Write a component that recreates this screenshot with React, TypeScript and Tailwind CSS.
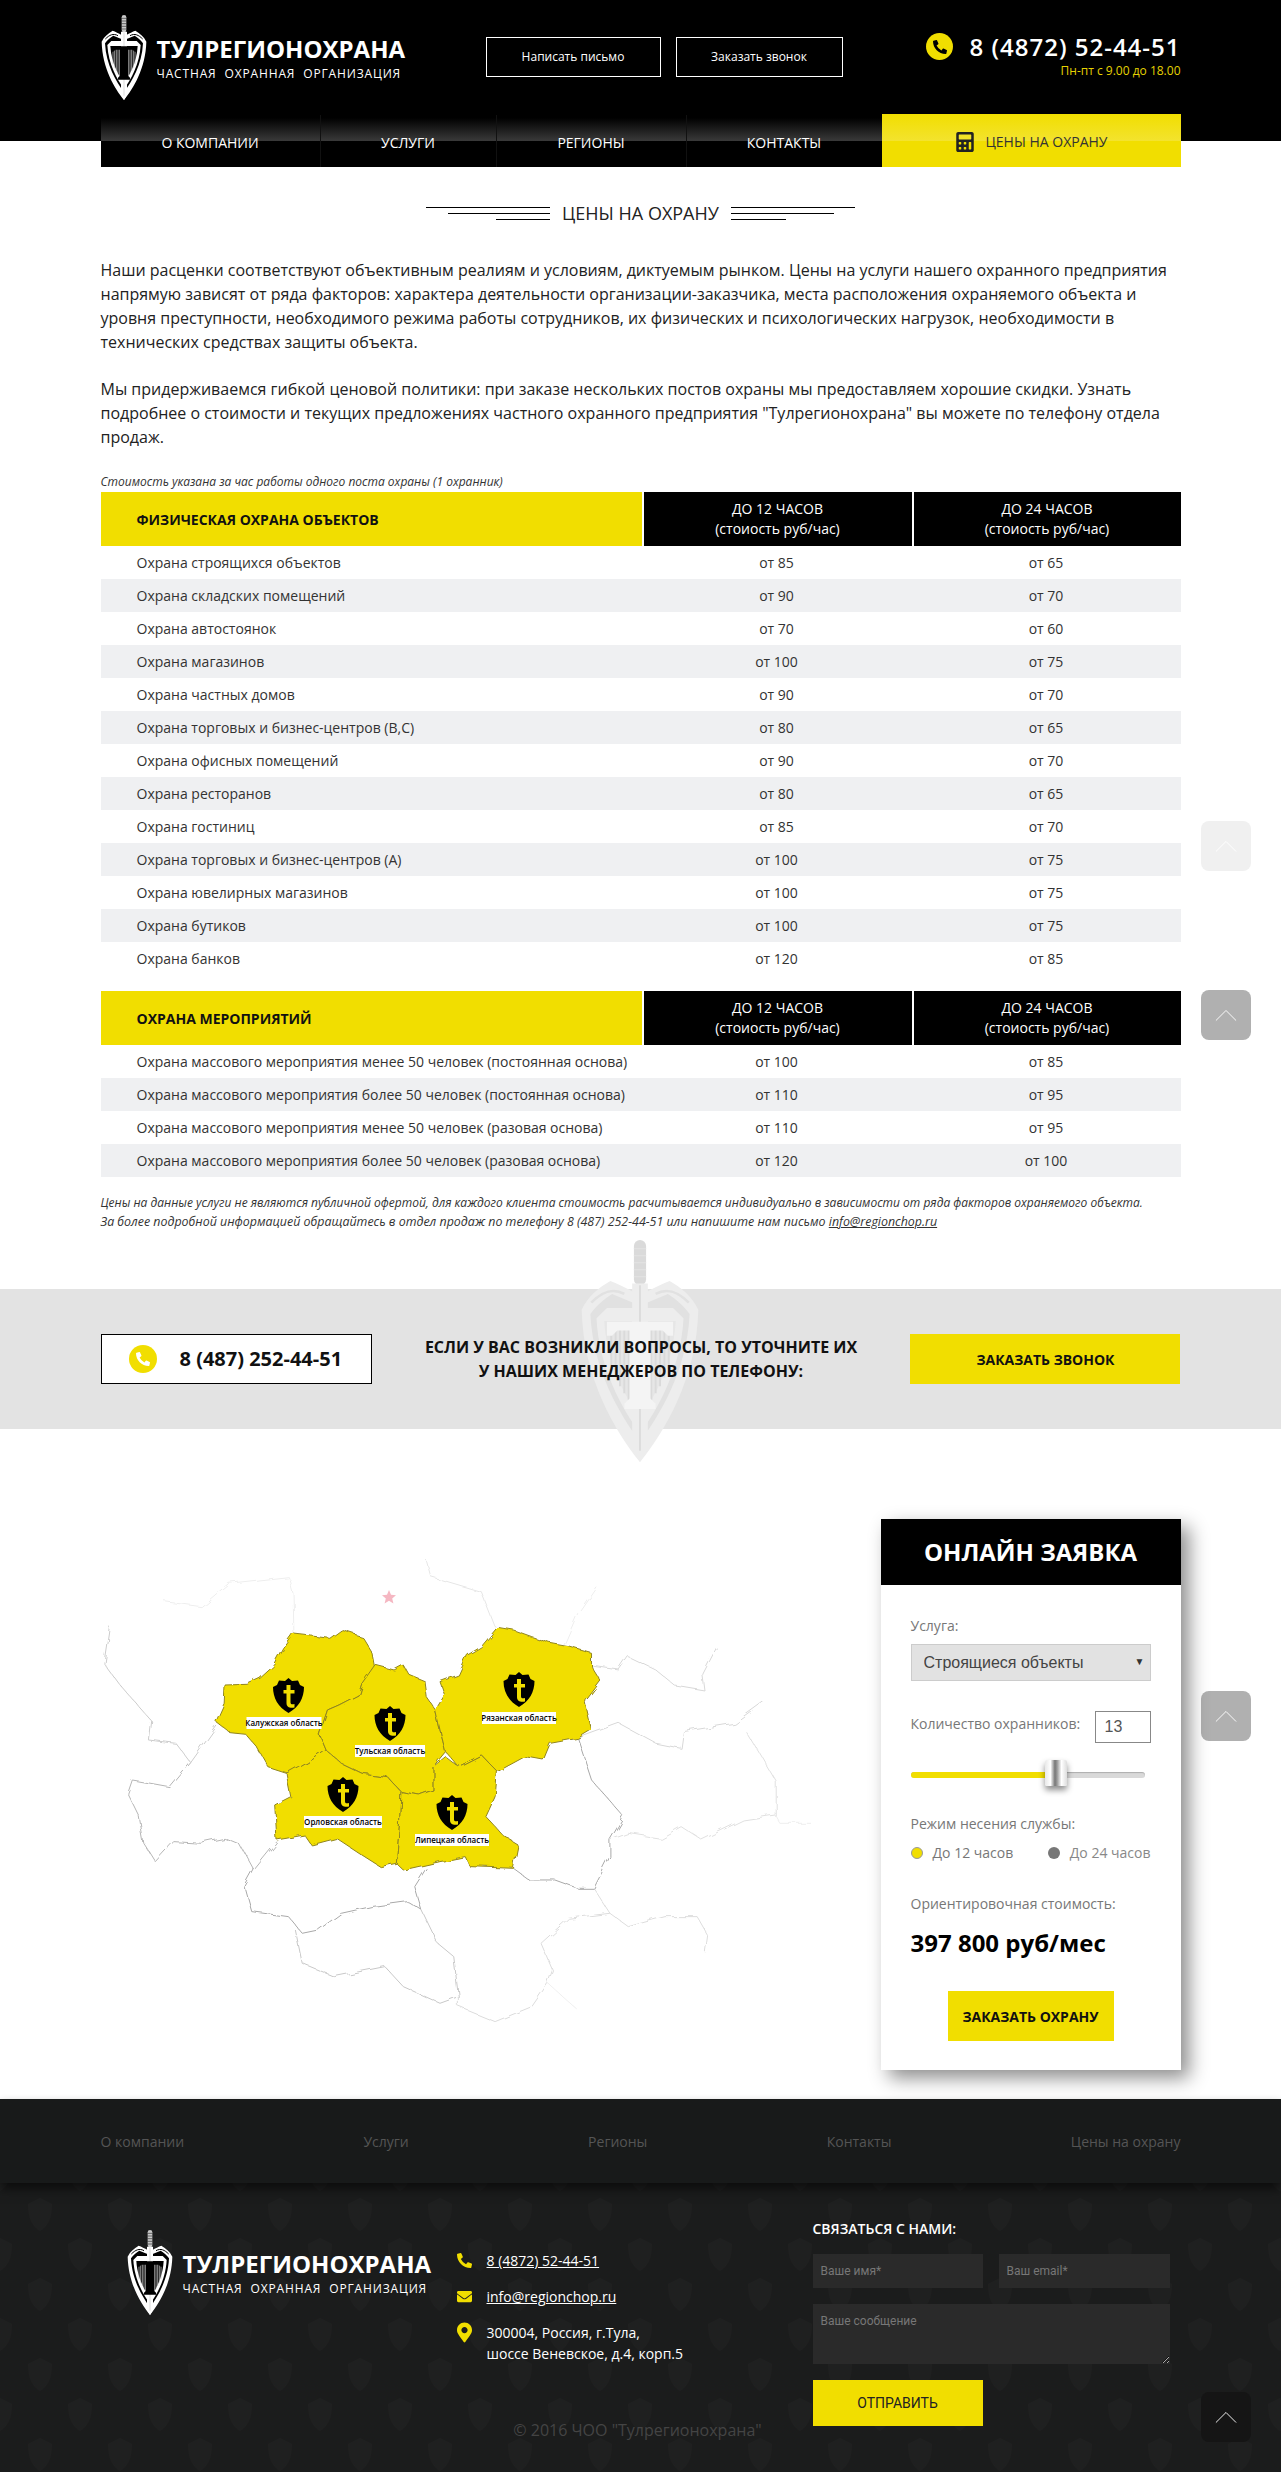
import { FaPhoneAlt, FaEnvelope, FaMapMarkerAlt, FaCalculator } from 'react-icons/fa';

const physical: [string, string, string][] = [
  ['Охрана строящихся объектов', 'от 85', 'от 65'],
  ['Охрана складских помещений', 'от 90', 'от 70'],
  ['Охрана автостоянок', 'от 70', 'от 60'],
  ['Охрана магазинов', 'от 100', 'от 75'],
  ['Охрана частных домов', 'от 90', 'от 70'],
  ['Охрана торговых и бизнес-центров (B,C)', 'от 80', 'от 65'],
  ['Охрана офисных помещений', 'от 90', 'от 70'],
  ['Охрана ресторанов', 'от 80', 'от 65'],
  ['Охрана гостиниц', 'от 85', 'от 70'],
  ['Охрана торговых и бизнес-центров (A)', 'от 100', 'от 75'],
  ['Охрана ювелирных магазинов', 'от 100', 'от 75'],
  ['Охрана бутиков', 'от 100', 'от 75'],
  ['Охрана банков', 'от 120', 'от 85'],
];

const events: [string, string, string][] = [
  ['Охрана массового мероприятия менее 50 человек (постоянная основа)', 'от 100', 'от 85'],
  ['Охрана массового мероприятия более 50 человек (постоянная основа)', 'от 110', 'от 95'],
  ['Охрана массового мероприятия менее 50 человек (разовая основа)', 'от 110', 'от 95'],
  ['Охрана массового мероприятия более 50 человек (разовая основа)', 'от 120', 'от 100'],
];

const navItems = [
  { label: 'О компании', cls: 'w-[219px]' },
  { label: 'Услуги', cls: 'w-[176px]' },
  { label: 'Регионы', cls: 'w-[190px]' },
  { label: 'Контакты', cls: 'w-[196px]' },
];

// region shapes are traced in a 1568x1500 box, squeezed to 720x500 on the page
const regions = [
  'M272 545 L290 490 L292 435 L340 433 L368 415 L400 375 L420 325 L442 282 L480 288 L520 295 L545 270 L590 290 L612 340 L618 385 L590 430 L582 465 L540 495 L515 510 L497 585 L510 628 L470 665 L430 700 L385 680 L360 620 L335 580 L300 575 Z',
  'M618 375 L660 390 L680 375 L690 400 L725 420 L730 470 L750 510 L760 570 L772 635 L745 680 L745 750 L715 765 L675 755 L645 710 L590 700 L545 670 L510 628 L497 585 L515 510 L540 495 L582 465 L590 430 Z',
  'M885 262 L920 270 L960 290 L1000 310 L1040 320 L1090 340 L1090 380 L1108 420 L1075 480 L1090 570 L1060 595 L1000 610 L985 660 L945 650 L885 695 L850 645 L800 680 L772 635 L760 570 L750 510 L770 465 L760 425 L800 405 L820 345 L850 320 Z',
  'M510 628 L545 670 L590 700 L645 710 L675 755 L672 850 L665 970 L630 980 L590 945 L535 895 L480 915 L465 885 L405 900 L400 795 L435 770 L425 700 L470 665 Z',
  'M675 755 L715 765 L745 750 L745 680 L772 650 L800 680 L850 645 L885 695 L880 770 L860 830 L900 890 L930 915 L920 985 L825 980 L815 950 L760 965 L680 990 L665 970 L672 850 Z',
];

const borders = [
  { d: 'M160 185 L240 200 L300 130 L430 110 L440 160 L442 285', c: '#eeeeee' },
  { d: 'M730 60 L740 110 L850 155 L880 260', c: '#e6e6e6' },
  { d: 'M1030 315 L1060 220 L1100 140', c: '#eeeeee' },
  { d: 'M40 260 L28 370 L60 430 L130 540 L125 600 L185 610 L215 665 L272 555', c: '#cccccc' },
  { d: 'M215 665 L170 740 L90 720 L80 760 L105 830 L115 910 L140 965 L180 905 L240 910 L290 895 L325 915 L355 990 L405 905', c: '#b5b5b5' },
  { d: 'M355 990 L335 1040 L350 1115 L430 1130 L460 1180 L495 1170 L545 1120 L610 1100 L690 1085 L720 1110 L705 1040 L730 985', c: '#a8a8a8' },
  { d: 'M445 1170 L460 1270 L530 1310 L640 1280 L680 1340 L760 1390 L800 1370 L790 1250 L755 1210 L720 1110', c: '#c8c8c8' },
  { d: 'M920 985 L955 1020 L1010 1020 L1060 1045 L1095 1045 L1130 950 L1130 900 L1160 830 L1090 720 L1060 595', c: '#a8a8a8' },
  { d: 'M1095 1045 L1130 1120 L1170 1160 L1250 1130 L1320 1130 L1345 1190 L1340 1240', c: '#dddddd' },
  { d: 'M1130 900 L1170 880 L1240 895 L1285 860 L1330 900 L1420 840 L1490 825 L1490 720 L1430 580', c: '#e0e0e0' },
  { d: 'M1060 595 L1150 550 L1230 610 L1285 625 L1290 575 L1400 550 L1470 480', c: '#d8d8d8' },
  { d: 'M1090 378 L1150 390 L1170 350 L1230 390 L1270 435 L1335 450 L1330 400 L1360 320', c: '#d8d8d8' },
  { d: 'M1130 1120 L1040 1135 L980 1210 L1005 1290 L995 1330 L960 1400 L880 1445 L800 1400 L800 1370', c: '#dcdcdc' },
  { d: 'M995 1330 L1060 1410', c: '#f0f0f0' },
  { d: 'M1490 825 L1500 850 L1568 850', c: '#eeeeee' },
];

const pins = [
  { name: 'Калужская область', lx: 283, ly: 1723, w: 75, sx: 287.5, sy: 1695 },
  { name: 'Тульская область', lx: 389, ly: 1751, w: 70, sx: 389, sy: 1723 },
  { name: 'Рязанская область', lx: 518, ly: 1718, w: 74, sx: 518, sy: 1689 },
  { name: 'Орловская область', lx: 342, ly: 1822, w: 78, sx: 342, sy: 1794 },
  { name: 'Липецкая область', lx: 451, ly: 1840, w: 74, sx: 451, sy: 1812 },
];

type EmblemProps = { className: string; band?: string; gap?: string; field?: string; rib?: string; bar?: string };

function Emblem({ className, band = '#ffffff', gap = '#000000', field = '#000000', rib = '#c9c9c9', bar = '#000000' }: EmblemProps) {
  return (
    <svg viewBox="0 0 136 255" className={className}>
      <rect x="61" y="0" width="14" height="52" rx="7" fill={rib} />
      <path d="M61 10h14M61 18h14M61 26h14M61 34h14M61 42h14" stroke={gap} strokeWidth="1.500" />
      <path d="M68 255 C40 220 3 160 1 80 C8 65 20 55 34 47 C42 50 52 55 61 60 L75 60 C84 55 94 50 102 47 C116 55 128 65 135 80 C133 160 96 220 68 255 Z" fill={band} />
      <path d="M68 232 C45 200 14 150 11 85 C18 75 27 68 36 62 L60 72 L76 72 L100 62 C109 68 118 75 125 85 C122 150 91 200 68 232 Z" fill={gap} />
      <path d="M68 222 C48 195 21 148 18 90 L30 78 L106 78 L118 90 C115 148 88 195 68 222 Z" fill={band} />
      <path d="M68 205 C52 180 30 145 27 93 L109 93 C106 145 84 180 68 205 Z" fill={field} />
      <path d="M35 100v48M40 100v58M45 100v68M50 100v76M55 100v84M81 100v84M86 100v76M91 100v68M96 100v58M101 100v48" stroke={rib} strokeWidth="2.200" />
      <path d="M59 50 h18 v190 l-9 15 l-9 -15 Z" fill={band} />
      <path d="M68 52 v190" stroke={rib} strokeWidth="2" />
      <path d="M30 94 h76 v16 h-6 l-6 -6 h-14 v78 l6 6 v6 h-36 v-6 l6 -6 v-78 h-14 l-6 6 h-6 Z" fill={bar} />
      <path d="M12 72 C24 60 36 54 50 62 M124 72 C112 60 100 54 86 62" fill="none" stroke={gap} strokeWidth="3" />
    </svg>
  );
}

function Brand() {
  return (
    <div className="flex items-start">
      <Emblem className="w-[46px] h-[85px] shrink-0" />
      <div className="ml-[10px] pt-[22px] text-white">
        <div className="text-[24px] leading-[24px] font-bold whitespace-nowrap">ТУЛРЕГИОНОХРАНА</div>
        <div className="mt-[5px] text-[12px] leading-[16px] tracking-[0.85px] [word-spacing:4px] whitespace-nowrap">ЧАСТНАЯ ОХРАННАЯ ОРГАНИЗАЦИЯ</div>
      </div>
    </div>
  );
}

function Chevron({ className }: { className: string }) {
  return (
    <svg viewBox="0 0 24 14" fill="none" className={className}>
      <path d="M1 12.5 L12 1.5 L23 12.5" stroke="currentColor" strokeWidth="1" />
    </svg>
  );
}

function PriceTable({ title, rows }: { title: string; rows: [string, string, string][] }) {
  return (
    <div>
      <div className="grid grid-cols-[541px_270px_269px] h-[54px]">
        <div className="bg-[#f1de00] flex items-center pl-[36px] text-[14px] font-bold text-[#111]">{title}</div>
        <div className="bg-black border-l-2 border-white flex flex-col items-center justify-center text-white text-[14px] leading-[20px]">
          <span>ДО 12 ЧАСОВ</span>
          <span>(стоиость руб/час)</span>
        </div>
        <div className="bg-black border-l-2 border-white flex flex-col items-center justify-center text-white text-[14px] leading-[20px]">
          <span>ДО 24 ЧАСОВ</span>
          <span>(стоиость руб/час)</span>
        </div>
      </div>
      {rows.map((row, i) => (
        <div key={row[0]} className={`grid grid-cols-[541px_270px_269px] h-[33px] items-center text-[14px] text-[#333] ${i % 2 === 1 ? 'bg-[#eff0f2]' : ''}`}>
          <div className="pl-[36px]">{row[0]}</div>
          <div className="text-center">{row[1]}</div>
          <div className="text-center">{row[2]}</div>
        </div>
      ))}
    </div>
  );
}

function RegionMap() {
  return (
    <svg viewBox="90 1540 720 500" className="w-[720px] h-[500px] -ml-[10px] mt-[21px] shrink-0">
      <defs>
        <filter id="wobble" filterUnits="userSpaceOnUse" x="90" y="1540" width="720" height="500">
          <feTurbulence type="fractalNoise" baseFrequency="0.07" numOctaves="2" seed="4" />
          <feDisplacementMap in="SourceGraphic" scale="7" />
          <feGaussianBlur stdDeviation="0.3" />
        </filter>
      </defs>
      <g filter="url(#wobble)">
        <g transform="translate(90 1540) scale(0.4592 0.3333)">
          {borders.map((b) => (
            <path key={b.d} d={b.d} fill="none" stroke={b.c} strokeWidth="1" vectorEffect="non-scaling-stroke" strokeLinejoin="round" />
          ))}
          {regions.map((d) => (
            <path key={d} d={d} fill="#f1de00" stroke="#8f8420" strokeWidth="1" vectorEffect="non-scaling-stroke" strokeLinejoin="round" />
          ))}
        </g>
      </g>
      <path d="M388 1590 l2 4.800 l5 0.400 l-3.800 3.200 l1.200 5 l-4.400 -2.700 l-4.400 2.700 l1.200 -5 l-3.800 -3.200 l5 -0.400 Z" fill="#f5b7c2" />
      {pins.map((p) => (
        <g key={p.name}>
          <g transform={`translate(${p.sx - 15.5} ${p.sy - 17})`}>
            <path d="M15.500 0 L19 3 L25 2.500 L27 7 L31 9 C31 20 26 29 15.500 35 C5 29 0 20 0 9 L4 7 L6 2.500 L12 3 Z" fill="#000" />
            <path d="M13.500 7 h4 v5 h4 v3.500 h-4 v9 c0 2 2 2 4 1.500 v3.500 c-4 1 -8 0 -8 -4.500 v-9.500 h-3 v-3.500 h3 Z" fill="#f1de00" />
          </g>
          <rect x={p.lx - p.w / 2} y={p.ly - 6} width={p.w} height="12" fill="#fff" />
          <text x={p.lx} y={p.ly + 3} textAnchor="middle" fontSize="8" fontWeight="600" fill="#000">{p.name}</text>
        </g>
      ))}
    </svg>
  );
}

function OrderCard() {
  return (
    <div className="w-[300px] h-[551px] shrink-0 bg-white shadow-[8px_8px_18px_rgba(0,0,0,0.45)] relative z-10">
      <div className="h-[66px] bg-black flex items-center justify-center text-white text-[24px] font-bold">ОНЛАЙН ЗАЯВКА</div>
      <div className="px-[30px] text-[#777] text-[14px]">
        <div className="pt-[31px] leading-[20px]">Услуга:</div>
        <div className="relative mt-[8px]">
          <select className="w-full h-[37px] bg-[#e2e2e2] border border-[#cccccc] pl-[12px] appearance-none font-['Liberation_Sans',sans-serif] text-[16px] text-[#444]">
            <option>Строящиеся объекты</option>
          </select>
          <span className="absolute right-[6px] top-[10px] text-[10px] leading-[14px] text-[#333]">▼</span>
        </div>
        <div className="flex justify-between items-start mt-[30px]">
          <span className="leading-[26px]">Количество охранников:</span>
          <input readOnly value="13" className="w-[56px] h-[32px] border border-[#888] pl-[9px] font-['Liberation_Sans',sans-serif] text-[16px] text-[#555]" />
        </div>
        <div className="relative h-[26px] mt-[17px] w-[234px]">
          <div className="absolute left-0 right-0 top-[12px] h-[6px] rounded-full bg-[#d9d9d9] shadow-[inset_0_1px_1px_rgba(0,0,0,0.2)]" />
          <div className="absolute left-0 top-[12px] h-[6px] w-[136px] rounded-l-full bg-[#f1de00]" />
          <div className="absolute left-[134px] top-0 w-[22px] h-[26px] rounded-[2px] bg-[linear-gradient(90deg,#e8e8e8,#ffffff_25%,#777_45%,#999_55%,#fff_75%,#ddd)] shadow-[0_4px_6px_rgba(0,0,0,0.45)]" />
        </div>
        <div className="mt-[28px] leading-[20px]">Режим несения службы:</div>
        <div className="flex justify-between mt-[9px] leading-[20px]">
          <div className="flex items-center">
            <span className="w-[12px] h-[12px] rounded-full bg-[#f1de00] border border-[#999] mr-[10px]" />
            До 12 часов
          </div>
          <div className="flex items-center text-[#888]">
            <span className="w-[12px] h-[12px] rounded-full bg-[#777] mr-[10px]" />
            До 24 часов
          </div>
        </div>
        <div className="mt-[31px] leading-[20px]">Ориентировочная стоимость:</div>
        <div className="mt-[13px] text-[24px] leading-[32px] font-bold text-black whitespace-nowrap">397 800 руб/мес</div>
        <div className="flex justify-center mt-[32px]">
          <button className="w-[166px] h-[50px] bg-[#f1de00] text-[14px] font-bold text-[#111]">ЗАКАЗАТЬ ОХРАНУ</button>
        </div>
      </div>
    </div>
  );
}

function ShieldPattern() {
  return (
    <svg className="absolute inset-0 w-full h-full">
      <defs>
        <pattern id="shields" x="0" y="15" width="80" height="80" patternUnits="userSpaceOnUse">
          <path d="M40 0 L46 3 L52 6 C52 20 48 28 40 33 C32 28 28 20 28 6 L34 3 Z" fill="#1f2020" />
          <path d="M0 40 L6 43 L12 46 C12 60 8 68 0 73 C-8 68 -12 60 -12 46 L-6 43 Z" fill="#1f2020" />
          <path d="M80 40 L86 43 L92 46 C92 60 88 68 80 73 C72 68 68 60 68 46 L74 43 Z" fill="#1f2020" />
        </pattern>
      </defs>
      <rect width="100%" height="100%" fill="url(#shields)" />
    </svg>
  );
}

export default function App() {
  return (
    <div className="relative font-['Open_Sans',sans-serif] bg-white overflow-hidden">
      {/* шапка */}
      <header className="bg-black h-[141px]">
        <div className="w-[1080px] mx-auto">
          <div className="h-[115px] flex items-start justify-between">
            <div className="pt-[15px] w-[385px]">
              <Brand />
            </div>
            <div className="flex gap-[15px] mt-[37px]">
              <button className="w-[175px] h-[40px] border border-white text-white text-[12px]">Написать письмо</button>
              <button className="w-[167px] h-[40px] border border-white text-white text-[12px]">Заказать звонок</button>
            </div>
            <div className="ml-auto pt-[33px] text-right">
              <div className="flex items-center">
                <span className="w-[27px] h-[27px] rounded-full bg-[#f1de00] flex items-center justify-center mr-[16px]">
                  <FaPhoneAlt className="text-[14px] text-black" />
                </span>
                <span className="text-[24px] leading-[27px] font-semibold text-white tracking-[1px]">8 (4872) 52-44-51</span>
              </div>
              <div className="text-[12px] leading-[16px] text-[#e6d200] mt-[3px]">Пн-пт с 9.00 до 18.00</div>
            </div>
          </div>
          <nav className="flex h-[52px] relative z-10">
            {navItems.map((item, i) => (
              <a key={item.label} className={`${item.cls} ${i > 0 ? 'border-l border-[#111]' : ''} h-full pt-[2px] flex items-center justify-center uppercase text-[14px] text-white bg-[linear-gradient(180deg,#000_3px,#3a3a3a_26px,#000_26px)]`}>
                {item.label}
              </a>
            ))}
            <a className="flex-1 -mt-[1px] bg-[linear-gradient(180deg,#f1de00,#f3e32e_27px,#f1de00_27px)] flex items-center justify-center gap-[11px] uppercase text-[14px] text-[#333] pt-[2px]">
              <FaCalculator className="text-[20px] text-[#222]" />
              Цены на охрану
            </a>
          </nav>
        </div>
      </header>

      <main>
        <div className="w-[1080px] mx-auto">
          <div className="pt-[60px] flex justify-center items-center gap-[12px] h-[84px]">
            <div className="w-[124px] flex flex-col items-end gap-[5px]">
              <span className="block h-px w-[124px] bg-black" />
              <span className="block h-px w-[102px] bg-black" />
              <span className="block h-px w-[54px] bg-black" />
            </div>
            <h1 className="text-[18px] leading-[24px] text-[#222]">ЦЕНЫ НА ОХРАНУ</h1>
            <div className="w-[124px] flex flex-col items-start gap-[5px]">
              <span className="block h-px w-[124px] bg-black" />
              <span className="block h-px w-[103px] bg-black" />
              <span className="block h-px w-[55px] bg-black" />
            </div>
          </div>
          <p className="mt-[33px] text-[16px] leading-[24px] text-[#222]">
            Наши расценки соответствуют объективным реалиям и условиям, диктуемым рынком. Цены на услуги нашего охранного предприятия напрямую зависят от ряда факторов: характера деятельности организации-заказчика, места расположения охраняемого объекта и уровня преступности, необходимого режима работы сотрудников, их физических и психологических нагрузок, необходимости в технических средствах защиты объекта.
          </p>
          <p className="mt-[23px] text-[16px] leading-[24px] text-[#222]">
            Мы придерживаемся гибкой ценовой политики: при заказе нескольких постов охраны мы предоставляем хорошие скидки. Узнать подробнее о стоимости и текущих предложениях частного охранного предприятия "Тулрегионохрана" вы можете по телефону отдела продаж.
          </p>
          <div className="mt-[24px] h-[19px] text-[12px] leading-[18px] italic text-[#333]">Стоимость указана за час работы одного поста охраны (1 охранник)</div>
          <PriceTable title="ФИЗИЧЕСКАЯ ОХРАНА ОБЪЕКТОВ" rows={physical} />
          <div className="mt-[16px]">
            <PriceTable title="ОХРАНА МЕРОПРИЯТИЙ" rows={events} />
          </div>
          <div className="mt-[16px] text-[12px] leading-[19px] italic text-[#333]">
            <div>Цены на данные услуги не являются публичной офертой, для каждого клиента стоимость расчитывается индивидуально в зависимости от ряда факторов охраняемого объекта.</div>
            <div className="text-[12.4px]">За более подробной информацией обращайтесь в отдел продаж по телефону 8 (487) 252-44-51 или напишите нам письмо <a className="underline">info@regionchop.ru</a></div>
          </div>
        </div>

        <section className="relative mt-[58px] h-[140px] bg-[#e3e3e3]">
          <Emblem className="absolute left-[578px] -top-[49px] w-[124px] h-[222px]" band="#ededed" gap="#e1e1e1" field="#e6e6e6" rib="#dadada" bar="#f4f4f4" />
          <div className="relative w-[1080px] mx-auto h-full flex items-center justify-between">
            <div className="w-[271px] h-[50px] border border-black bg-white flex items-center pl-[27px]">
              <span className="w-[28px] h-[28px] rounded-full bg-[#f1de00] flex items-center justify-center mr-[23px]">
                <FaPhoneAlt className="text-[14px] text-white" />
              </span>
              <span className="text-[20px] font-bold text-[#111] whitespace-nowrap">8 (487) 252-44-51</span>
            </div>
            <div className="text-center text-[16px] leading-[24px] font-bold text-[#111]">
              ЕСЛИ У ВАС ВОЗНИКЛИ ВОПРОСЫ, ТО УТОЧНИТЕ ИХ
              <br />
              У НАШИХ МЕНЕДЖЕРОВ ПО ТЕЛЕФОНУ:
            </div>
            <button className="w-[270px] h-[50px] bg-[#f1de00] text-[14px] font-bold text-[#111]">ЗАКАЗАТЬ ЗВОНОК</button>
          </div>
        </section>

        <section className="w-[1080px] mx-auto pt-[90px] pb-[29px] flex justify-between items-start">
          <RegionMap />
          <OrderCard />
        </section>
      </main>

      <footer>
        <div className="relative z-10 h-[84px] bg-[#181a1a] shadow-[0_6px_10px_rgba(0,0,0,0.55)]">
          <div className="w-[1080px] h-full mx-auto flex items-center justify-between text-[14px] text-[#555]">
            <a>О компании</a>
            <a>Услуги</a>
            <a>Регионы</a>
            <a>Контакты</a>
            <a>Цены на охрану</a>
          </div>
        </div>
        <div className="relative h-[289px] bg-[#1b1c1c] overflow-hidden">
          <ShieldPattern />
          <div className="relative w-[1080px] mx-auto flex">
            <div className="w-[356px] pl-[26px] pt-[47px]">
              <Brand />
            </div>
            <div className="w-[356px] pt-[67px] text-[14px] leading-[21px] text-white">
              <div className="flex">
                <FaPhoneAlt className="w-[15px] h-[21px] text-[#f1de00] mr-[15px]" />
                <a className="underline">8 (4872) 52-44-51</a>
              </div>
              <div className="flex mt-[15px]">
                <FaEnvelope className="w-[15px] h-[21px] text-[#f1de00] mr-[15px]" />
                <a className="underline">info@regionchop.ru</a>
              </div>
              <div className="flex mt-[15px]">
                <FaMapMarkerAlt className="w-[15px] h-[21px] text-[#f1de00] mr-[15px]" />
                <span>
                  300004, Россия, г.Тула,
                  <br />
                  шоссе Веневское, д.4, корп.5
                </span>
              </div>
            </div>
            <form className="w-[357px] pt-[36px]">
              <div className="text-[14px] leading-[20px] font-semibold text-white">СВЯЗАТЬСЯ С НАМИ:</div>
              <div className="flex justify-between mt-[15px] font-['Roboto',sans-serif]">
                <input placeholder="Ваше имя*" className="w-[170px] h-[34px] bg-[#2a2a2a] pl-[8px] text-[12px] placeholder:text-[#777]" />
                <input placeholder="Ваш email*" className="w-[171px] h-[34px] bg-[#2a2a2a] pl-[8px] text-[12px] placeholder:text-[#777]" />
              </div>
              <textarea placeholder="Ваше сообщение" className="block w-full h-[60px] mt-[16px] bg-[#2a2a2a] pl-[8px] pt-[8px] text-[12px] font-['Roboto',sans-serif] placeholder:text-[#777]" />
              <button type="button" className="block w-[170px] h-[46px] mt-[16px] bg-[#f1de00] text-[14px] font-['Roboto',sans-serif] text-[#222]">ОТПРАВИТЬ</button>
            </form>
          </div>
          <div className="absolute left-[-6px] right-0 top-[235px] text-center text-[16px] leading-[24px] text-[#444]">© 2016 ЧОО "Тулрегионохрана"</div>
        </div>
      </footer>

      {/* кнопки наверх */}
      <a className="absolute left-[1201px] top-[821px] w-[50px] h-[50px] rounded-[8px] bg-[#f0f0f0] flex items-center justify-center text-white"><Chevron className="w-[22px] h-[13px]" /></a>
      <a className="absolute left-[1201px] top-[990px] w-[50px] h-[50px] rounded-[8px] bg-[#b0b0b0] flex items-center justify-center text-white"><Chevron className="w-[22px] h-[13px]" /></a>
      <a className="absolute left-[1201px] top-[1691px] w-[50px] h-[50px] rounded-[8px] bg-[#b0b0b0] flex items-center justify-center text-white"><Chevron className="w-[22px] h-[13px]" /></a>
      <a className="absolute left-[1201px] top-[2392px] w-[50px] h-[50px] rounded-[8px] bg-[#151515] flex items-center justify-center text-white"><Chevron className="w-[22px] h-[13px]" /></a>
    </div>
  );
}
